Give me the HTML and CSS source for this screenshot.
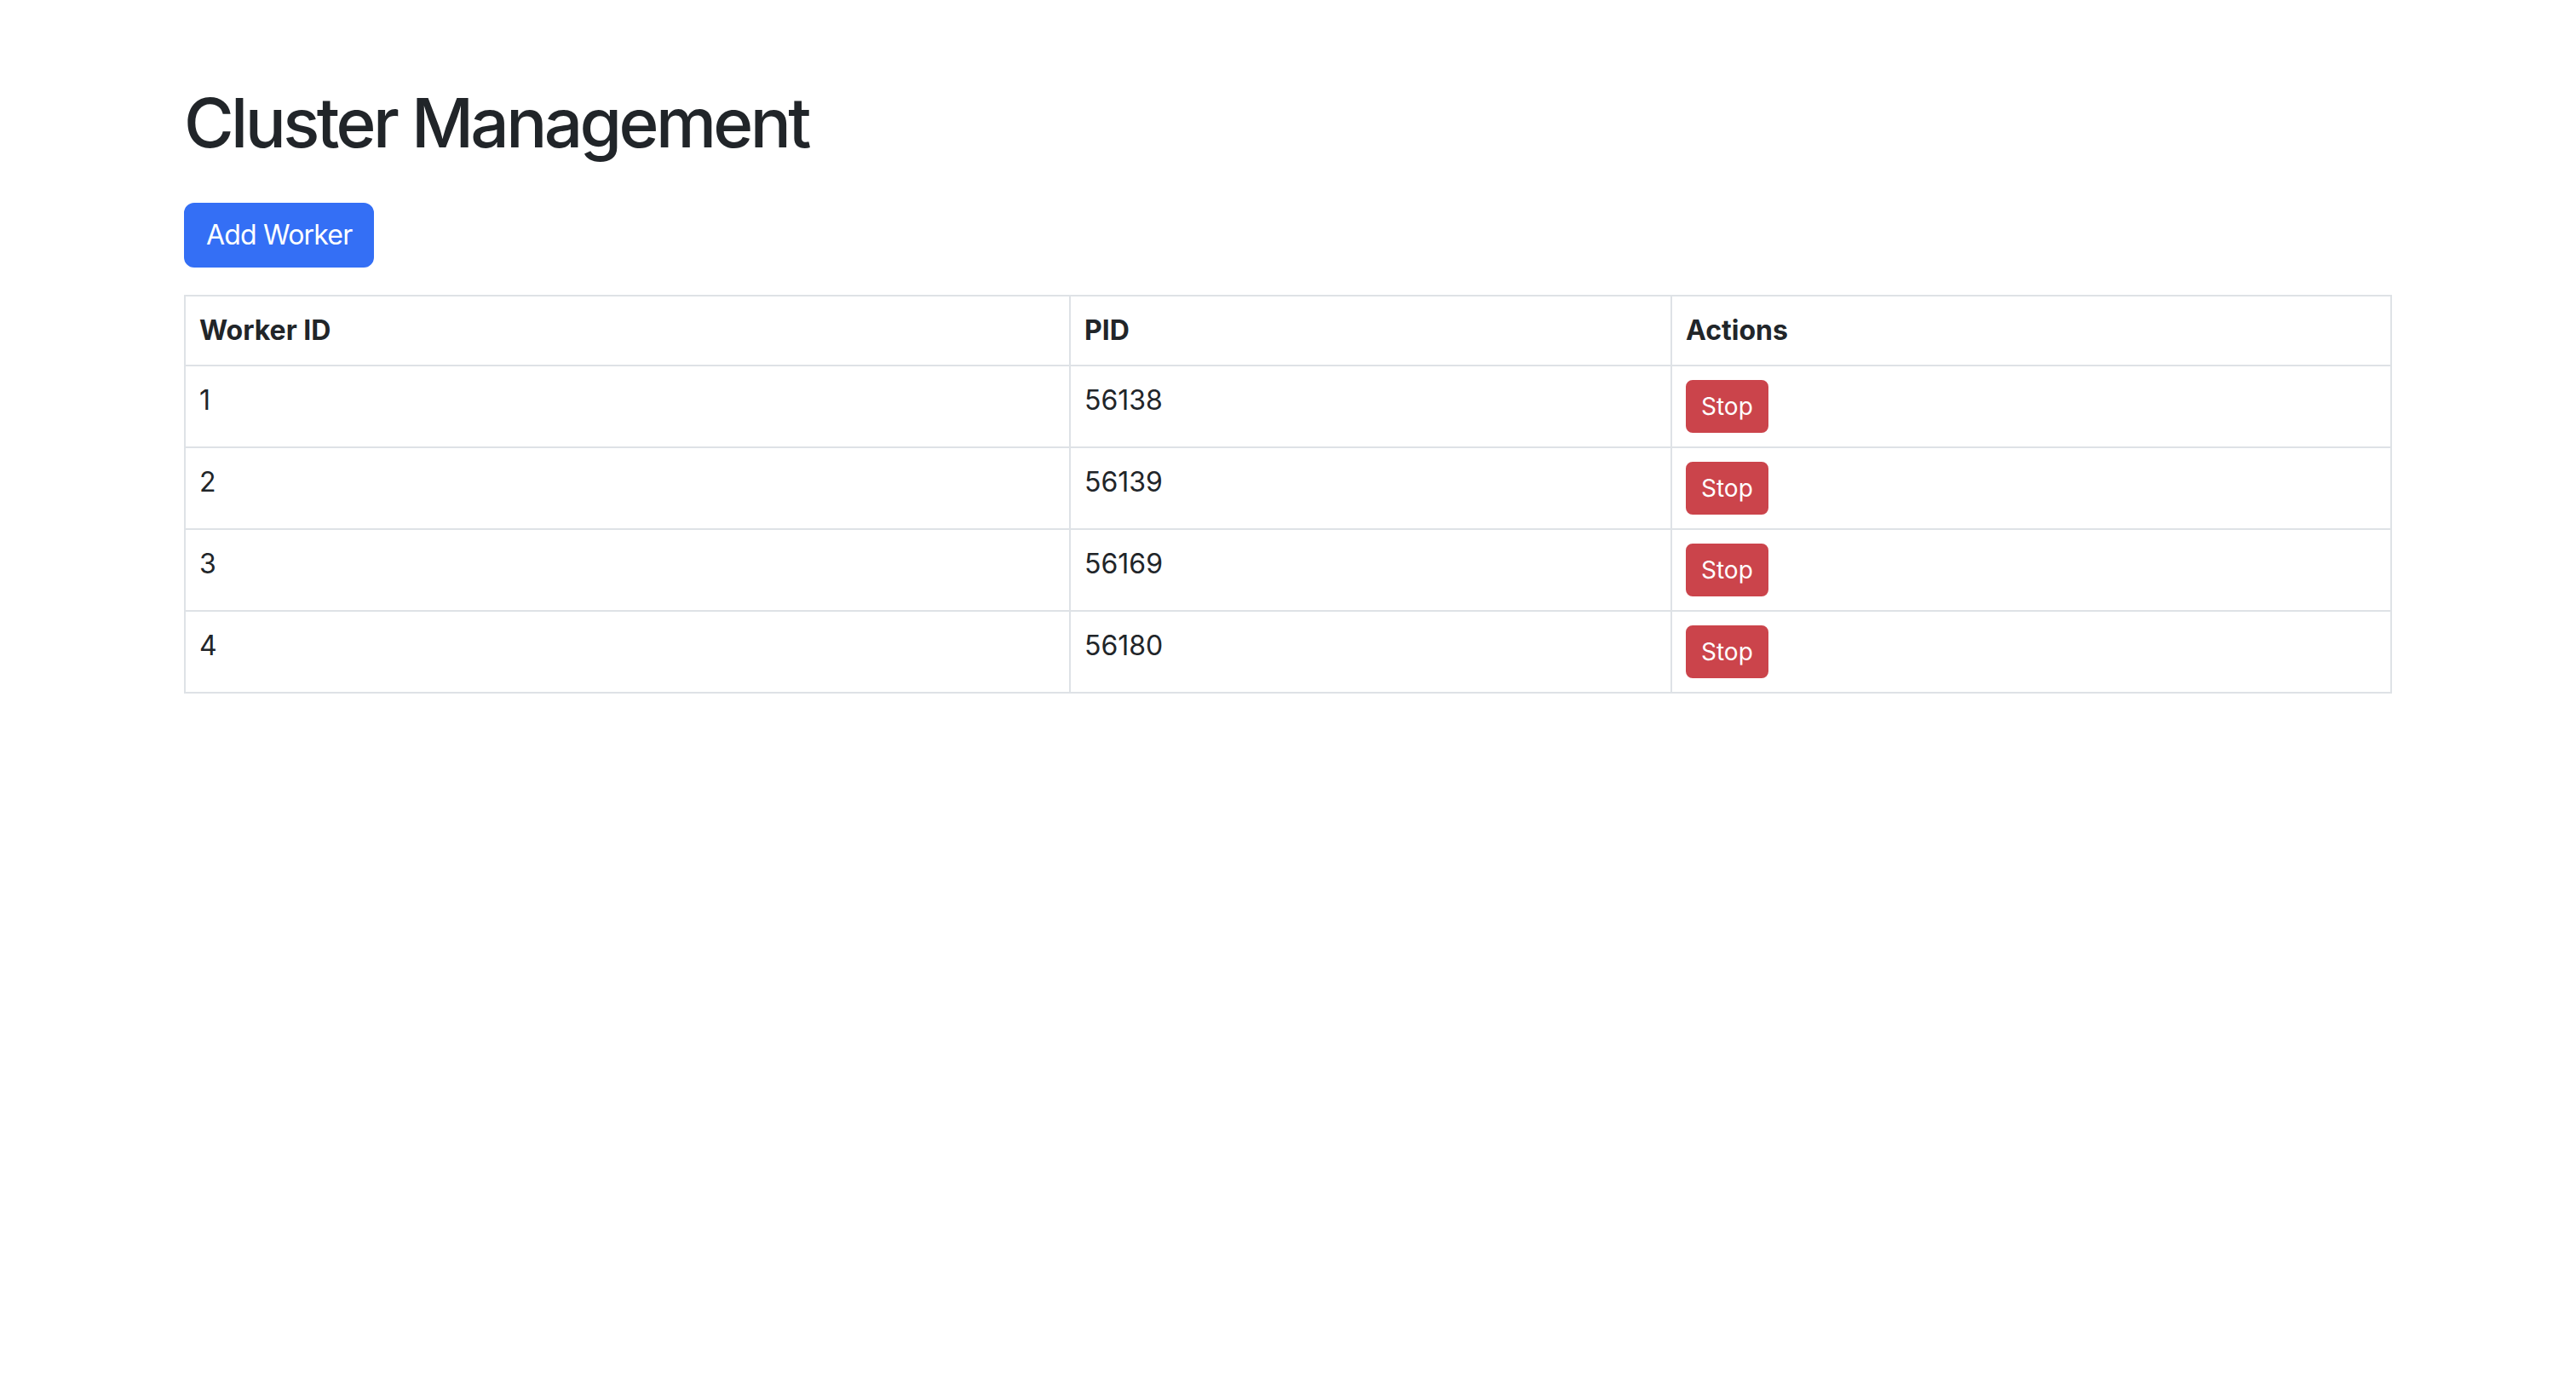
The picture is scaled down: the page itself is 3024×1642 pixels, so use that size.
FILE: index.html
```html
<!DOCTYPE html>
<html lang="en">
<head>
<meta charset="utf-8">
<title>Cluster Management</title>
<link rel="stylesheet" href="styles.css">
</head>
<body>
<div class="container">
  <h1 class="title">Cluster Management</h1>
  <button class="btn btn-primary add-btn" type="button">Add Worker</button>
  <table class="workers">
    <thead>
      <tr><th class="col-id">Worker ID</th><th class="col-pid">PID</th><th class="col-actions">Actions</th></tr>
    </thead>
    <tbody>
      <tr><td>1</td><td>56138</td><td><button class="btn btn-sm btn-danger" type="button">Stop</button></td></tr>
      <tr><td>2</td><td>56139</td><td><button class="btn btn-sm btn-danger" type="button">Stop</button></td></tr>
      <tr><td>3</td><td>56169</td><td><button class="btn btn-sm btn-danger" type="button">Stop</button></td></tr>
      <tr><td>4</td><td>56180</td><td><button class="btn btn-sm btn-danger" type="button">Stop</button></td></tr>
    </tbody>
  </table>
</div>
</body>
</html>
```
FILE: styles.css
```css
html, body {
  margin: 0;
  padding: 0;
  background: #ffffff;
}

body {
  font-family: Inter, "Noto Sans", "Liberation Sans", sans-serif;
  font-size: 32px;
  line-height: 48px;
  color: #212529;
}

.container {
  max-width: 2592px;
  padding: 0 24px;
  margin: 96px auto 0;
}

.title {
  font-size: 80px;
  line-height: 96px;
  font-weight: 500;
  letter-spacing: -3.6px;
  margin: 0 0 46px;
}

.btn {
  display: inline-block;
  font-family: inherit;
  border: 2px solid transparent;
  cursor: pointer;
  color: #ffffff;
}

.btn-primary {
  background: #346ff5;
  border-color: #346ff5;
  font-size: 32px;
  line-height: 48px;
  letter-spacing: -0.8px;
  padding: 12px 24px;
  border-radius: 12px;
}

.add-btn {
  display: block;
  margin-bottom: 32px;
}

.btn-sm {
  font-size: 28px;
  line-height: 42px;
  padding: 8px 16px;
  border-radius: 8px;
}

.btn-danger {
  background: #cb444b;
  border-color: #cb444b;
}

.workers {
  width: 100%;
  border-collapse: separate;
  border-spacing: 0;
  table-layout: fixed;
  border-top: 2px solid #dee2e6;
  border-left: 2px solid #dee2e6;
}

.workers th,
.workers td {
  box-sizing: border-box;
  border-right: 2px solid #dee2e6;
  border-bottom: 2px solid #dee2e6;
  padding: 16px;
  text-align: left;
  vertical-align: top;
}

.workers .col-id { width: 1039px; }
.workers .col-pid { width: 706px; }
.workers .col-actions { width: 845px; }

.workers th {
  font-weight: 700;
}
```
